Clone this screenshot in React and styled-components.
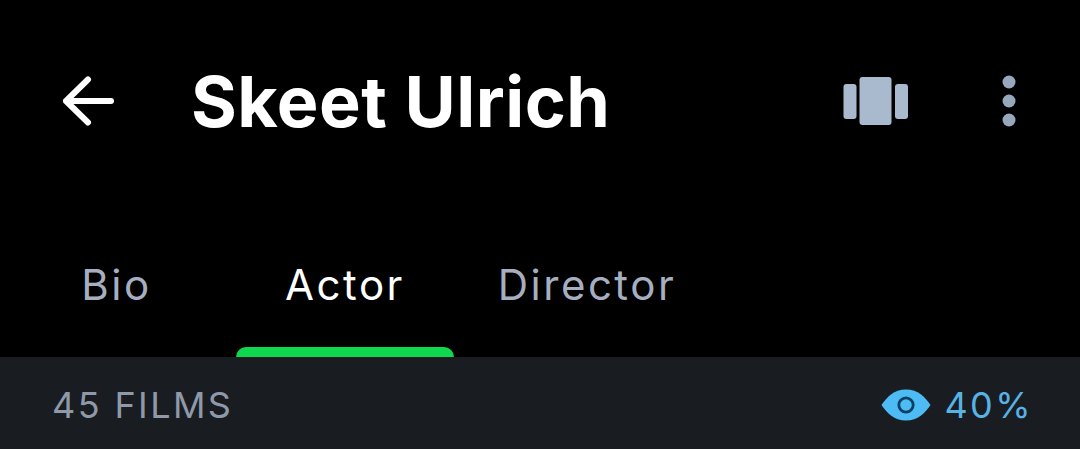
import styled, { createGlobalStyle } from "styled-components";

const GlobalStyle = createGlobalStyle`
  html, body {
    margin: 0;
    background: #000;
  }
`;

const Page = styled.div`
  width: 1080px;
  height: 449px;
  display: flex;
  flex-direction: column;
  overflow: hidden;
  background: #000;
  font-family: "Inter", "Liberation Sans", sans-serif;
`;

const Toolbar = styled.header`
  height: 202px;
  display: flex;
  align-items: center;
  padding: 0 64px 0 62px;
`;

const BackButton = styled.svg`
  width: 54px;
  height: 50px;
  flex: none;
`;

const Title = styled.h1`
  flex: 1;
  margin: 0 0 0 75px;
  color: #fff;
  font-size: 70px;
  font-weight: 700;
  letter-spacing: 0.5px;
`;

const Actions = styled.div`
  display: flex;
  align-items: center;
  gap: 93px;
`;

const Tabs = styled.nav`
  height: 155px;
  display: flex;
  align-items: stretch;
  padding-left: 27px;
`;

const Tab = styled.div`
  position: relative;
  width: ${(p) => p.$width}px;
  margin-right: ${(p) => p.$after || 0}px;
  display: flex;
  justify-content: center;
  padding-top: 58px;
  box-sizing: border-box;
  color: ${(p) => (p.$active ? "#fff" : "#a6afc0")};
  font-size: 42px;
  line-height: 50px;
  letter-spacing: 2.5px;

  ${(p) =>
    p.$active &&
    `&::after {
      content: "";
      position: absolute;
      left: 0;
      right: 0;
      bottom: 0;
      height: 10px;
      background: #0fd850;
      border-radius: 10px 10px 0 0;
    }`}
`;

const StatsBar = styled.div`
  flex: 1;
  display: flex;
  align-items: center;
  justify-content: space-between;
  padding: 3px 47px 0 52px;
  background: #191d22;
`;

const FilmCount = styled.span`
  color: #8e99a9;
  font-size: 36px;
  letter-spacing: 2.4px;
`;

const WatchedGroup = styled.div`
  display: flex;
  align-items: center;
  gap: 13px;
`;

const WatchedValue = styled.span`
  color: #57b2e6;
  font-size: 36px;
  letter-spacing: 2.4px;
`;

export default function App() {
  return (
    <Page>
      <GlobalStyle />
      <Toolbar>
        <BackButton viewBox="0 0 54 50" fill="none" stroke="#fff" strokeWidth="6" strokeLinecap="round" strokeLinejoin="round">
          <path d="M26 3.5 L4 25 L26 46.5 M4 25 H49" />
        </BackButton>
        <Title>Skeet Ulrich</Title>
        <Actions>
          <svg width="66" height="48" viewBox="0 0 66 48" fill="#a9bace">
            <rect x="0.5" y="7" width="13" height="35" rx="3" />
            <rect x="16.5" y="0" width="32" height="48" rx="3" />
            <rect x="52" y="7" width="13" height="35" rx="3" />
          </svg>
          <svg width="14" height="52" viewBox="0 0 14 52" fill="#97a8bc">
            <circle cx="7" cy="7" r="6.5" />
            <circle cx="7" cy="26" r="6.5" />
            <circle cx="7" cy="45" r="6.5" />
          </svg>
        </Actions>
      </Toolbar>
      <Tabs>
        <Tab $width={179} $after={30}>Bio</Tab>
        <Tab $width={218} $active>Actor</Tab>
        <Tab $width={266}>Director</Tab>
      </Tabs>
      <StatsBar>
        <FilmCount>45 FILMS</FilmCount>
        <WatchedGroup>
          <svg width="50" height="32" viewBox="0 0 50 32">
            <path d="M0.5 16 C6 8 13 0.5 25 0.5 C37 0.5 44 8 49.5 16 C44 24 37 31.5 25 31.5 C13 31.5 6 24 0.5 16 Z" fill="#4dbcf5" />
            <circle cx="25" cy="16" r="7.2" fill="none" stroke="#0c3f66" strokeWidth="2.8" />
          </svg>
          <WatchedValue>40%</WatchedValue>
        </WatchedGroup>
      </StatsBar>
    </Page>
  );
}
